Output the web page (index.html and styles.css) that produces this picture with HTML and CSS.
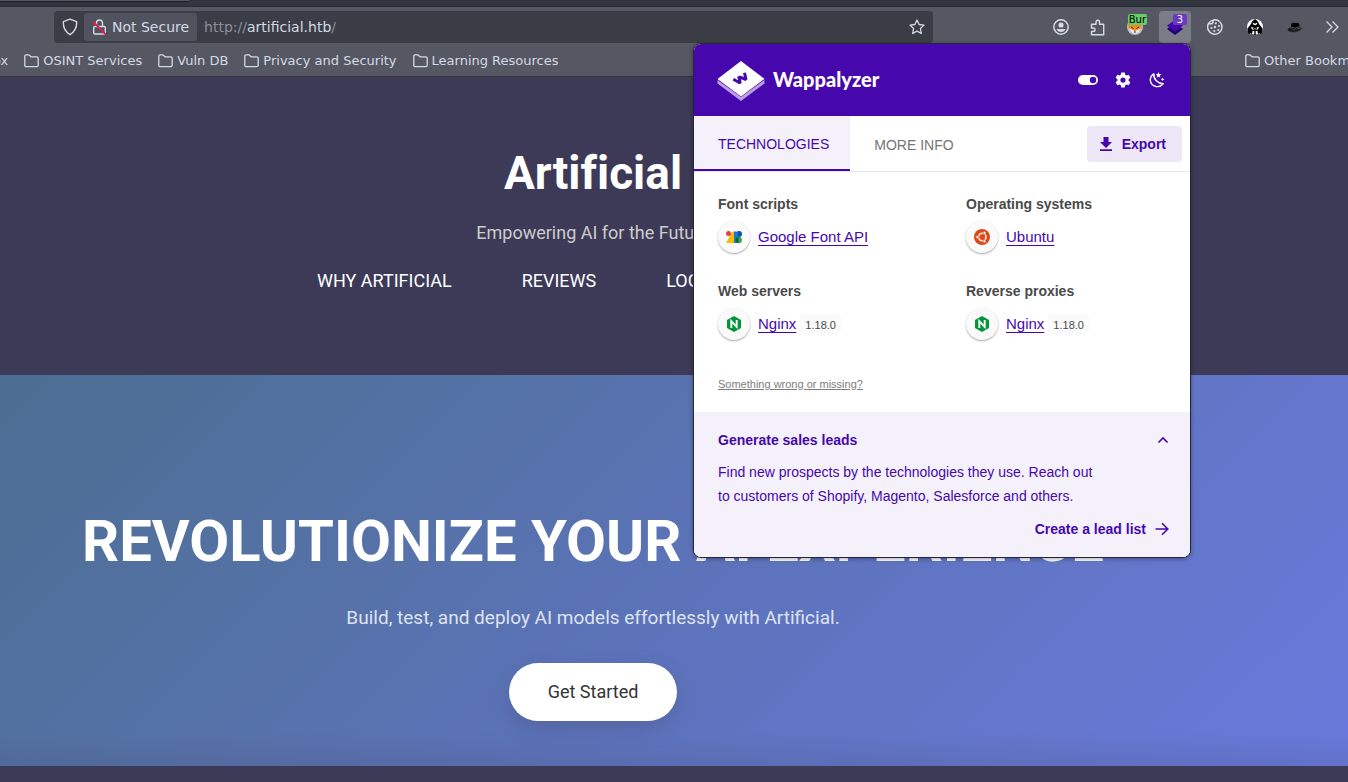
FILE: index.html
```html
<!DOCTYPE html>
<html lang="en">
<head>
<meta charset="utf-8">
<title>Artificial</title>
<link rel="stylesheet" href="styles.css">
</head>
<body>
<svg class="defs" aria-hidden="true">
  <symbol id="folder" viewBox="0 0 15 14"><path d="M.8 11.3V2.2Q.8.8 2.2.8H5L7 2.8H12.800Q14.200 2.800 14.200 4.200V11.300Q14.200 12.700 12.800 12.700H2.200Q.8 12.700.8 11.300Z" fill="none" stroke="currentColor" stroke-width="1.3"/></symbol>
  <symbol id="nginx" viewBox="0 0 16 16"><path d="M8 0 15 4V12L8 16 1 12V4Z" fill="#009639"/><path d="M5.300 12V5.200L10.700 10.800V4" fill="none" stroke="#fff" stroke-width="1.900"/></symbol>
</svg>

<div class="browser">
  <div class="tabstrip"><div class="tabstrip-tab"></div></div>
  <div class="toolbar">
    <div class="urlbar">
      <button class="shield" aria-label="Tracking protection">
        <svg width="16" height="18" viewBox="0 0 16 18"><path d="M8 1.200 14.600 3.600Q15.300 12.300 8 16.700 .7 12.300 1.400 3.600Z" fill="none" stroke="currentColor" stroke-width="1.400" stroke-linejoin="round"/></svg>
      </button>
      <button class="security">
        <svg width="15" height="18" viewBox="0 0 15 18"><path d="M3 8.500H12Q13.300 8.500 13.300 9.800V14.700Q13.300 16 12 16H3Q1.700 16 1.700 14.700V9.800Q1.700 8.500 3 8.500ZM4.500 8V5Q4.500 2 7.500 2T10.500 5V8" fill="none" stroke="currentColor" stroke-width="1.400"/><path d="M.8 3.500 14 16.700" stroke="#e8194d" stroke-width="1.800"/></svg>
        Not Secure
      </button>
      <div class="address"><span>http://</span><input type="text" value="artificial.htb" aria-label="Address"><span>/</span></div>
      <button class="star" aria-label="Bookmark this page">
        <svg width="16" height="16" viewBox="0 0 16 16"><path d="M8 1 10.100 5.500 15 6.100 11.400 9.500 12.300 14.500 8 12.100 3.700 14.500 4.600 9.500 1 6.100 5.900 5.500Z" fill="none" stroke="currentColor" stroke-width="1.300" stroke-linejoin="round"/></svg>
      </button>
    </div>
    <div class="tools">
      <button class="tool" aria-label="Account"><svg width="16" height="16" viewBox="0 0 16 16"><circle cx="8" cy="8" r="7.200" fill="none" stroke="currentColor" stroke-width="1.500"/><circle cx="8" cy="6" r="2.600" fill="currentColor"/><path d="M3.500 10H12.500Q11.500 13 8 13T3.500 10Z" fill="currentColor"/></svg></button>
      <button class="tool" aria-label="Extensions"><svg width="16" height="17" viewBox="0 0 16 17"><path d="M1.500 7V5.200H6V3.500Q6 1.200 7.800 1.200T9.500 3.500V5.200H13.700V15.700H1.500V12.500H3Q5 12.500 5 10.700T3 9H1.500V7" fill="none" stroke="currentColor" stroke-width="1.400" stroke-linejoin="round"/></svg></button>
      <div class="extensions">
        <button class="tool" aria-label="FoxyProxy"><svg width="18" height="18" viewBox="0 0 18 18"><circle cx="9" cy="9" r="8" fill="#b9bdc4"/><path d="M2 5 6 7H12L16 5 15.500 10.500 9 15.500 2.500 10.500Z" fill="#f08a24"/><path d="M3 10.500 7 12 9 13.500 11 12 15 10.500 12.500 14.500 9 16 5.500 14.500Z" fill="#e9e9ec"/><path d="M5 9 7.500 10.500M10.500 10.500 13 9M8 14H10" stroke="#4b2b12"/></svg><span class="badge badge-green">Bur</span></button>
        <button class="tool tool-active" aria-label="Wappalyzer"><svg width="18" height="18" viewBox="0 0 18 18"><path d="M1 11 9 5 17 11 9 17Z" fill="#210070"/><path d="M1 7.500 9 2 17 7.500 9 14Z" fill="#4608ad"/></svg><span class="badge badge-purple">3</span></button>
        <button class="tool" aria-label="Cookie editor"><svg width="16" height="16" viewBox="0 0 16 16"><path d="M6.500 .9A7.200 7.200 0 1 0 12.500 2.500M6.500 .9 5.500 4.500 2.200 5" fill="none" stroke="currentColor" stroke-width="1.500"/><path d="M6.500 .9Q10 .2 12.500 2.500" fill="none" stroke="currentColor" stroke-width="1.500"/><g fill="currentColor"><circle cx="8.800" cy="4.300" r="1.100"/><circle cx="8" cy="8" r="1.200"/><circle cx="4.500" cy="9" r="1.100"/><circle cx="7.300" cy="12" r="1.100"/><circle cx="11.300" cy="11" r="1.100"/><circle cx="12" cy="7" r="1.100"/></g></svg></button>
        <button class="tool" aria-label="Mask"><svg width="16" height="16" viewBox="0 0 16 16"><circle cx="8" cy="8" r="8" fill="#fff"/><path d="M8 0 11 2.500 12 5 15.500 9.500 14.500 15 12 14 11 16H5L4 14 1.500 15 .5 9.500 4 5 5 2.500Z" fill="#000"/><path d="M5.700 3.500 8 4.700 10.300 3.500 10 5.200 8 6.300 6 5.200Z" fill="#fff"/><path d="M4 7.800 8 9.300 12 7.800 11 10.500H5ZM5 15.500 5.500 12H7.300V15.500ZM11 15.500 10.500 12H8.700V15.500Z" fill="#fff"/><path d="M6 9.200 8 10.300 10 9.200" stroke="#000" fill="none"/></svg></button>
        <button class="tool" aria-label="Hat"><svg width="16" height="12" viewBox="0 0 16 12"><path d="M3.800 7 4.300 3Q5.500 1.300 7 1.800 8.500 2.300 9.500 1.900 12 1.200 12.300 3.500L12.800 6.500Q8 9 3.800 7Z" fill="#000"/><path d="M.7 8.500Q1.500 11.300 7 11 13.500 10.500 15.300 6.500 12 8.300 8 8.600 4 8.900 3.500 6.800 .8 7 .7 8.500Z" fill="#17181c"/><path d="M.7 8.500Q1.500 11.300 7 11 13.500 10.500 15.300 6.500" fill="none" stroke="#33343a" stroke-width=".6"/><path d="M4 6.200Q8 8 12.600 5.800" stroke="#85868c" fill="none" stroke-width=".6"/></svg></button>
      </div>
      <button class="tool" aria-label="More tools"><svg width="14" height="14" viewBox="0 0 14 14"><path d="M1.500 1.500 7 7 1.500 12.500M7.500 1.500 13 7 7.500 12.500" fill="none" stroke="currentColor" stroke-width="1.300"/></svg></button>
    </div>
  </div>
  <nav class="bookmarks" aria-label="Bookmarks">
    <a class="bookmark bookmark-clipped" href="#">ox</a>
    <a class="bookmark" href="#"><svg class="folder"><use href="#folder"/></svg>OSINT Services</a>
    <a class="bookmark" href="#"><svg class="folder"><use href="#folder"/></svg>Vuln DB</a>
    <a class="bookmark" href="#"><svg class="folder"><use href="#folder"/></svg>Privacy and Security</a>
    <a class="bookmark" href="#"><svg class="folder"><use href="#folder"/></svg>Learning Resources</a>
    <a class="bookmark bookmark-other" href="#"><svg class="folder"><use href="#folder"/></svg>Other Bookmarks</a>
  </nav>
</div>

<header class="site-header">
  <h1 class="brand">Artificial</h1>
  <p class="tagline">Empowering AI for the Future</p>
  <nav class="site-nav">
    <a href="#">WHY ARTIFICIAL</a>
    <a href="#">REVIEWS</a>
    <a href="#">LOGIN</a>
    <a href="#">REGISTER</a>
  </nav>
</header>
<main class="hero">
  <h2 class="hero-title">REVOLUTIONIZE YOUR AI EXPERIENCE</h2>
  <p class="hero-text">Build, test, and deploy AI models effortlessly with Artificial.</p>
  <a class="hero-button" href="#">Get Started</a>
</main>

<aside class="popup" aria-label="Wappalyzer">
  <div class="popup-header">
    <svg width="48" height="40" viewBox="0 0 48 40"><path d="M.5 19 24 36 47.500 19V22.500L24 40 .5 22.500Z" fill="#b89fe0"/><path d="M24 0 47.500 18 24 35.500 .5 18Z" fill="#fff"/><path d="M16.300 18.300 23 22 22.500 15.800 29 18.600 27.500 11.800" fill="none" stroke="#4608ad" stroke-width="3" stroke-linejoin="bevel"/><path d="M21 15.500 23.500 22.300" stroke="#4608ad" stroke-width="2"/></svg>
    <span class="popup-name">Wappalyzer</span>
    <div class="popup-actions">
      <button aria-label="Disable"><svg width="20" height="20" viewBox="0 0 20 20"><rect y="5" width="20" height="10" rx="5" fill="#fff"/><circle cx="15" cy="10" r="3.200" fill="#4608ad"/></svg></button>
      <button aria-label="Settings"><svg width="18" height="18" viewBox="0 0 24 24"><path fill="#fff" d="M12 15.500A3.500 3.500 0 0 1 8.500 12 3.500 3.500 0 0 1 12 8.500 3.500 3.500 0 0 1 15.500 12 3.500 3.500 0 0 1 12 15.500M19.430 12.970C19.470 12.650 19.500 12.330 19.500 12S19.470 11.340 19.430 11L21.540 9.370C21.730 9.220 21.780 8.950 21.660 8.730L19.660 5.270C19.540 5.050 19.270 4.960 19.050 5.050L16.560 6.050C16.040 5.660 15.500 5.320 14.870 5.070L14.500 2.420C14.460 2.180 14.250 2 14 2H10C9.750 2 9.540 2.180 9.500 2.420L9.130 5.070C8.500 5.320 7.960 5.660 7.440 6.050L4.950 5.050C4.730 4.960 4.460 5.050 4.340 5.270L2.340 8.730C2.210 8.950 2.270 9.220 2.460 9.370L4.570 11C4.530 11.340 4.500 11.670 4.500 12S4.530 12.650 4.570 12.970L2.460 14.630C2.270 14.780 2.210 15.050 2.340 15.270L4.340 18.730C4.460 18.950 4.730 19.030 4.950 18.950L7.440 17.940C7.960 18.340 8.500 18.680 9.130 18.930L9.500 21.580C9.540 21.820 9.750 22 10 22H14C14.250 22 14.460 21.820 14.500 21.580L14.870 18.930C15.500 18.670 16.040 18.340 16.560 17.940L19.050 18.950C19.270 19.030 19.540 18.950 19.660 18.730L21.660 15.270C21.780 15.050 21.730 14.780 21.540 14.630L19.430 12.970Z"/></svg></button>
      <button aria-label="Dark mode"><svg width="18" height="18" viewBox="0 0 18 18"><path d="M5.800 2.800Q5.500 7 8.300 9.800T15.200 12.800Q12.300 16.300 8 15.500 2.800 14.300 2.300 9.300 2.200 5 5.800 2.800Z" fill="none" stroke="#fff" stroke-width="1.400" stroke-linejoin="round"/><path d="M10.500 1 11.300 3 13.500 3.200 11.800 4.500 12.300 6.700 10.500 5.500 8.700 6.700 9.200 4.500 7.600 3.200 9.700 3ZM14.500 6.500 15 7.800 16.500 8.300 15 8.900 14.500 10.200 14 8.900 12.700 8.300 14 7.800Z" fill="#fff"/></svg></button>
    </div>
  </div>
  <div class="popup-tabs">
    <button class="popup-tab popup-tab-active">TECHNOLOGIES</button>
    <button class="popup-tab">MORE INFO</button>
    <button class="export"><svg width="14" height="14" viewBox="0 0 14 14"><path d="M4.500 0H9.500V5H13L7 11 1 5H4.500ZM1 12.300H13V14H1Z" fill="currentColor"/></svg>Export</button>
  </div>
  <div class="technologies">
    <section class="category">
      <h3>Font scripts</h3>
      <div class="tech"><span class="tech-icon"><svg width="16" height="16" viewBox="0 0 16 16"><path d="M0 14 6.500 2.500H8.500V14Z" fill="#fbbc04"/><path d="M8 2.500H12.500V14H8Z" fill="#1a73e8"/><circle cx="2.500" cy="4.500" r="2.500" fill="#ea4335"/><path d="M12 2H13A2.800 2.800 0 0 1 13 8H12Z" fill="#174ea6"/><circle cx="12.700" cy="11" r="3.200" fill="#34a853"/><path d="M12.500 8V14A3 3 0 0 1 12.500 8Z" fill="#0d652d"/></svg></span><a href="#">Google Font API</a></div>
    </section>
    <section class="category">
      <h3>Operating systems</h3>
      <div class="tech"><span class="tech-icon"><svg width="16" height="16" viewBox="0 0 16 16"><circle cx="8" cy="8" r="8" fill="#dd4814"/><circle cx="8.300" cy="8" r="3.700" fill="none" stroke="#fff" stroke-width="1.500"/><g fill="#fff" stroke="#dd4814" stroke-width=".7"><circle cx="3.300" cy="8" r="1.500"/><circle cx="10.500" cy="3.800" r="1.500"/><circle cx="10.500" cy="12.200" r="1.500"/></g></svg></span><a href="#">Ubuntu</a></div>
    </section>
    <section class="category">
      <h3>Web servers</h3>
      <div class="tech"><span class="tech-icon"><svg width="16" height="16"><use href="#nginx"/></svg></span><a href="#">Nginx</a><span class="version">1.18.0</span></div>
    </section>
    <section class="category">
      <h3>Reverse proxies</h3>
      <div class="tech"><span class="tech-icon"><svg width="16" height="16"><use href="#nginx"/></svg></span><a href="#">Nginx</a><span class="version">1.18.0</span></div>
    </section>
  </div>
  <a class="report" href="#">Something wrong or missing?</a>
  <section class="leads">
    <button class="leads-toggle" aria-expanded="true">Generate sales leads<svg width="12" height="8" viewBox="0 0 12 8"><path d="M1.500 6.500 6 2 10.500 6.500" fill="none" stroke="currentColor" stroke-width="1.600"/></svg></button>
    <p>Find new prospects by the technologies they use. Reach out to customers of Shopify, Magento, Salesforce and others.</p>
    <a class="leads-link" href="#">Create a lead list<svg width="14" height="14" viewBox="0 0 14 14"><path d="M.5 7H12.500M7 1.200 12.800 7 7 12.800" fill="none" stroke="currentColor" stroke-width="1.600"/></svg></a>
  </section>
</aside>
</body>
</html>
```
FILE: styles.css
```css
* { box-sizing: border-box; }

body {
  margin: 0;
  min-height: 100vh;
  position: relative;
  overflow: hidden;
  background: #3c3a56;
  color: #fff;
  font-family: Roboto, sans-serif;
}

h1, h2, h3, p { margin: 0; }
svg { display: block; flex: none; }
button { border: 0; padding: 0; background: none; color: inherit; font: inherit; }
.defs { position: absolute; width: 0; height: 0; }

/* Browser chrome */
.browser {
  background: #555763;
  color: #d3dae3;
  font: 14px "DejaVu Sans", sans-serif;
  border-bottom: 1px solid #33343f;
}
.tabstrip { height: 7px; background: #30343f; border-bottom: 1px solid #292b34; }
.tabstrip-tab {
  width: 190px;
  height: 2px;
  background: #555763;
  border-bottom: 1px solid #1d1f26;
  border-radius: 0 0 4px 0;
}
.toolbar { display: flex; align-items: center; padding: 4px 0 3px 54px; }
.urlbar {
  flex: 1;
  display: flex;
  align-items: center;
  height: 32px;
  margin-right: 112px;
  padding-right: 8px;
  background: #3b3d46;
  border-radius: 4px;
}
.shield { width: 30px; display: flex; justify-content: center; padding-left: 2px; }
.security {
  display: flex;
  align-items: center;
  gap: 5px;
  height: 28px;
  padding: 0 8px;
  background: #50535d;
  border-radius: 3px;
}
.address { flex: 1; display: flex; align-items: center; padding-left: 7px; color: #8b8e97; }
.address input {
  field-sizing: content;
  border: 0;
  padding: 0;
  background: none;
  color: #d3dae3;
  font: inherit;
}
.tools, .extensions { display: flex; }
.tools { gap: 5px; }
.extensions { gap: 8px; }
.tool {
  position: relative;
  display: grid;
  place-items: center;
  width: 32px;
  height: 32px;
  border-radius: 4px;
}
.tool-active { background: #7a7c88; }
.badge {
  position: absolute;
  top: 3px;
  right: 4px;
  border-radius: 2px;
  font-size: 10px;
  line-height: 11px;
}
.badge-green { padding: 0 1px; background: #66cc66; color: #000; }
.badge-purple { padding: 0 4px; background: #6b39bd; color: #fff; }
.bookmarks {
  display: flex;
  gap: 16px;
  height: 30px;
  padding-bottom: 1px;
  overflow: hidden;
  font-size: 13px;
}
.bookmark {
  display: flex;
  align-items: center;
  gap: 4px;
  color: inherit;
  text-decoration: none;
  white-space: nowrap;
}
.bookmark-clipped { margin-left: -7px; }
.bookmark-other { margin-left: auto; width: 103px; }
.folder { width: 15px; height: 14px; }

/* Site */
.site-header, .hero {
  display: flex;
  flex-direction: column;
  align-items: center;
  padding-right: 162px;
}
.site-header { height: 298px; padding-top: 64px; }
.brand { font-size: 46px; line-height: 64px; font-variant-ligatures: none; }
.tagline { margin-top: 16px; color: #ccc; font-size: 18px; line-height: 24px; }
.site-nav { display: flex; gap: 70px; margin-top: 24px; font-size: 18px; line-height: 24px; }
.site-nav a { color: #fff; text-decoration: none; }
.hero {
  height: 391px;
  padding-top: 126px;
  background:
    linear-gradient(to top, rgba(60, 58, 86, .14), transparent 34px),
    linear-gradient(135deg, #4b6e91, #5672a9 33%, #5c73ba 52%, #6577ce 80%, #6879dc);
}
.hero-title { font-size: 58px; line-height: 80px; white-space: nowrap; }
.hero-text { margin-top: 25px; color: #dfe3f0; font-size: 19px; line-height: 24px; }
.hero-button {
  margin-top: 33px;
  padding: 17px 39px;
  border-radius: 30px;
  background: #fff;
  color: #333;
  box-shadow: 0 8px 20px rgba(60, 58, 86, .25);
  font-size: 18px;
  line-height: 24px;
  text-decoration: none;
}

/* Extension popup */
.popup {
  position: absolute;
  top: 43px;
  right: 157px;
  width: 498px;
  overflow: hidden;
  background: #fff;
  border: 1px solid #28243a;
  border-radius: 8px;
  box-shadow: 0 1px 4px rgba(0, 0, 0, .35);
  color: #4608ad;
  font: 14px "Liberation Sans", sans-serif;
}
.popup-header {
  display: flex;
  align-items: center;
  height: 72px;
  padding: 0 24px 0 23px;
  background: #4608ad;
  color: #fff;
}
.popup-header > svg { margin-top: 2px; }
.popup-name { margin-left: 8px; padding-bottom: 2px; font: 900 20px Lato, sans-serif; }
.popup-actions { display: flex; align-items: center; gap: 16px; margin-left: auto; }
.popup-tabs { display: flex; height: 56px; padding-right: 8px; border-bottom: 1px solid #e7e7e7; }
.popup-tab { padding: 2px 21px 0 24px; color: #757575; }
.popup-tab-active {
  padding-bottom: 0;
  background: #f4f1fb;
  border-bottom: 2px solid #4608ad;
  color: #4608ad;
}
.export {
  display: flex;
  align-items: center;
  gap: 9px;
  height: 36px;
  margin: 10px 0 0 auto;
  padding: 0 16px 0 12px;
  background: #ece6f6;
  border-radius: 4px;
  font-weight: bold;
}
.technologies {
  display: grid;
  grid-template-columns: 1fr 1fr;
  gap: 26px 24px;
  padding: 20px 0 0 24px;
}
.category h3 { color: #4a4a4a; font-size: 14px; line-height: 24px; }
.tech { display: flex; align-items: center; margin-top: 5px; }
.tech-icon {
  display: grid;
  place-items: center;
  width: 32px;
  height: 32px;
  margin-right: 8px;
  background: #fafafa;
  border-radius: 50%;
  box-shadow: 0 1px 2px rgba(0, 0, 0, .35);
}
.tech a { padding-bottom: 1px; color: inherit; font-size: 15px; text-underline-offset: 3px; }
.version {
  margin-left: 4px;
  padding: 1px 5px 0;
  background: #fafafa;
  border-radius: 4px;
  color: #4a4a4a;
  font-size: 11px;
  line-height: 20px;
}
.report {
  display: block;
  padding: 34px 24px 18px;
  color: #7d7d7d;
  font-size: 11px;
  line-height: 20px;
}
.leads { padding: 16px 21px 16px 24px; background: #f4f1fb; }
.leads-toggle {
  display: flex;
  align-items: center;
  justify-content: space-between;
  width: 100%;
  font-weight: bold;
  line-height: 24px;
}
.leads p { margin: 8px 68px 9px 0; line-height: 24px; }
.leads-link {
  display: flex;
  align-items: center;
  justify-content: flex-end;
  gap: 9px;
  color: inherit;
  font-weight: bold;
  line-height: 24px;
  text-decoration: none;
}
```
